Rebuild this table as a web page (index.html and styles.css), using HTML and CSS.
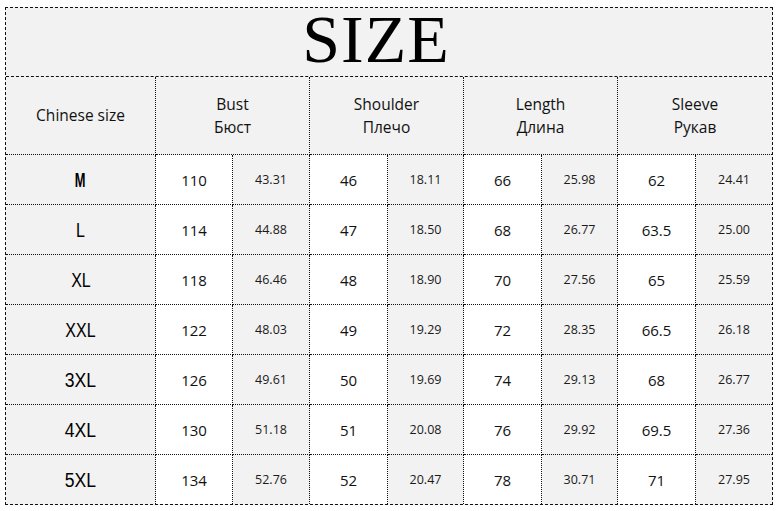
FILE: index.html
```html
<!DOCTYPE html>
<html>
<head>
<meta charset="utf-8">
<link rel="stylesheet" href="styles.css">
</head>
<body>
<div class="chart">
  <div class="cell title">SIZE</div>

  <div class="cell head">Chinese size</div>
  <div class="cell head span2">Bust<br>Бюст</div>
  <div class="cell head span2">Shoulder<br>Плечо</div>
  <div class="cell head span2">Length<br>Длина</div>
  <div class="cell head span2 last">Sleeve<br>Рукав</div>

  <div class="cell size"><span class="label bold">M</span></div>
  <div class="cell cm">110</div><div class="cell inch">43.31</div>
  <div class="cell cm">46</div><div class="cell inch">18.11</div>
  <div class="cell cm">66</div><div class="cell inch">25.98</div>
  <div class="cell cm">62</div><div class="cell inch last">24.41</div>

  <div class="cell size"><span class="label">L</span></div>
  <div class="cell cm">114</div><div class="cell inch">44.88</div>
  <div class="cell cm">47</div><div class="cell inch">18.50</div>
  <div class="cell cm">68</div><div class="cell inch">26.77</div>
  <div class="cell cm">63.5</div><div class="cell inch last">25.00</div>

  <div class="cell size"><span class="label">XL</span></div>
  <div class="cell cm">118</div><div class="cell inch">46.46</div>
  <div class="cell cm">48</div><div class="cell inch">18.90</div>
  <div class="cell cm">70</div><div class="cell inch">27.56</div>
  <div class="cell cm">65</div><div class="cell inch last">25.59</div>

  <div class="cell size"><span class="label">XXL</span></div>
  <div class="cell cm">122</div><div class="cell inch">48.03</div>
  <div class="cell cm">49</div><div class="cell inch">19.29</div>
  <div class="cell cm">72</div><div class="cell inch">28.35</div>
  <div class="cell cm">66.5</div><div class="cell inch last">26.18</div>

  <div class="cell size"><span class="label wide">3XL</span></div>
  <div class="cell cm">126</div><div class="cell inch">49.61</div>
  <div class="cell cm">50</div><div class="cell inch">19.69</div>
  <div class="cell cm">74</div><div class="cell inch">29.13</div>
  <div class="cell cm">68</div><div class="cell inch last">26.77</div>

  <div class="cell size"><span class="label wide">4XL</span></div>
  <div class="cell cm">130</div><div class="cell inch">51.18</div>
  <div class="cell cm">51</div><div class="cell inch">20.08</div>
  <div class="cell cm">76</div><div class="cell inch">29.92</div>
  <div class="cell cm">69.5</div><div class="cell inch last">27.36</div>

  <div class="cell size bottom"><span class="label wide">5XL</span></div>
  <div class="cell cm bottom">134</div><div class="cell inch bottom">52.76</div>
  <div class="cell cm bottom">52</div><div class="cell inch bottom">20.47</div>
  <div class="cell cm bottom">78</div><div class="cell inch bottom">30.71</div>
  <div class="cell cm bottom">71</div><div class="cell inch last bottom">27.95</div>
</div>
</body>
</html>
```

FILE: styles.css
```css
html, body {
  margin: 0;
  padding: 0;
  background: #ffffff;
}

body {
  padding: 7px 0 0 5px;
  font-family: "Open Sans", "Noto Sans", sans-serif;
  color: #111;
}

.chart {
  box-sizing: border-box;
  width: 768px;
  border: 1px dashed #111;
  background: #f2f2f2;
  display: grid;
  grid-template-columns: 150px 77px 77px 78px 76px 78px 76px 78px 76px;
  grid-template-rows: 69px 78px repeat(6, 50px) 49px;
}

.cell {
  box-sizing: border-box;
  display: flex;
  align-items: center;
  justify-content: center;
  text-align: center;
  border-right: 1px dotted #111;
  border-bottom: 1px dotted #111;
}

.cell.last { border-right: none; }
.cell.bottom { border-bottom: none; }

.title {
  grid-column: 1 / -1;
  border-right: none;
  border-bottom: 1px dashed #111;
  font-family: "Liberation Serif", "Times New Roman", serif;
  font-size: 68px;
  letter-spacing: 1px;
  color: #000;
  padding: 0 26px 6px 0;
}

.head {
  font-size: 15.5px;
  line-height: 23px;
}

.span2 { grid-column: span 2; }

.size {
  font-family: "Liberation Sans", Arial, sans-serif;
  font-size: 19.5px;
  color: #000;
  padding-top: 2px;
}

.label {
  display: inline-block;
  transform: scaleX(0.82);
}

.label.wide {
  transform: scaleX(0.9);
}

.label.bold {
  font-weight: bold;
  transform: scaleX(0.66);
}

.cm {
  background: #ffffff;
  font-size: 15px;
}

.inch {
  font-size: 12.5px;
  color: #1a1a1a;
}
```
